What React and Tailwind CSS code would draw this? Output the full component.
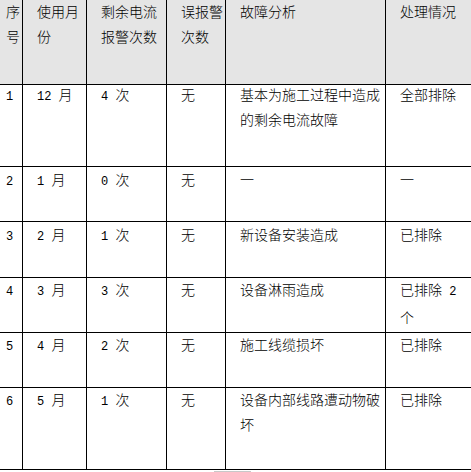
const rows = [
  ["1", "12 月", "4 次", "无", "基本为施工过程中造成的剩余电流故障", "全部排除"],
  ["2", "1 月", "0 次", "无", "一", "一"],
  ["3", "2 月", "1 次", "无", "新设备安装造成", "已排除"],
  ["4", "3 月", "3 次", "无", "设备淋雨造成", "已排除 2 个"],
  ["5", "4 月", "2 次", "无", "施工线缆损坏", "已排除"],
  ["6", "5 月", "1 次", "无", "设备内部线路遭动物破坏", "已排除"],
];

const head = ["序号", "使用月份", "剩余电流报警次数", "误报警次数", "故障分析", "处理情况"];

// half-width digits and spaces sit in a narrow mono face, like the original SimSun
function Text({ value }) {
  return value.split(/([0-9 ]+)/).map((part, i) =>
    /^[0-9 ]+$/.test(part) ? (
      <span key={i} className="font-['Liberation_Mono',monospace] text-[12px] whitespace-pre-wrap">
        {part}
      </span>
    ) : (
      <span key={i}>{part}</span>
    )
  );
}

function Cell({ children, col, shade }) {
  const pad = col === 0 ? "pl-[6px]" : "pl-[14px]";
  const edge = col === 5 ? "" : "border-r";
  return (
    <div className={`${pad} ${edge} border-b border-black ${shade ? "bg-[#e5e5e5]" : "bg-white"} overflow-hidden`}>
      {children}
    </div>
  );
}

export default function App() {
  return (
    <div className="w-[471px] h-[472px] overflow-hidden bg-white text-black text-[14px] leading-[25px] font-light font-['Noto_Sans_CJK_SC','Noto_Sans',sans-serif]">
      <div className="grid grid-cols-[23px_64px_80px_59px_160px_1fr] grid-rows-[85px_82px_55px_56px_55px_55px_82px]">
        {head.map((h, i) => (
          <Cell key={h} col={i} shade>
            <div className="-mt-px">{h}</div>
          </Cell>
        ))}
        {rows.map((row, r) =>
          row.map((c, i) => (
            <Cell key={r + "-" + i} col={i}>
              <div className={r === 0 ? "-mt-[3px]" : r < 3 ? "mt-0" : "-mt-px"}>
                <Text value={c} />
              </div>
            </Cell>
          ))
        )}
      </div>
      <div className="ml-[214px] mt-px w-[37px] h-[2px] border-x border-t border-[#c8c8c8]" />
    </div>
  );
}
